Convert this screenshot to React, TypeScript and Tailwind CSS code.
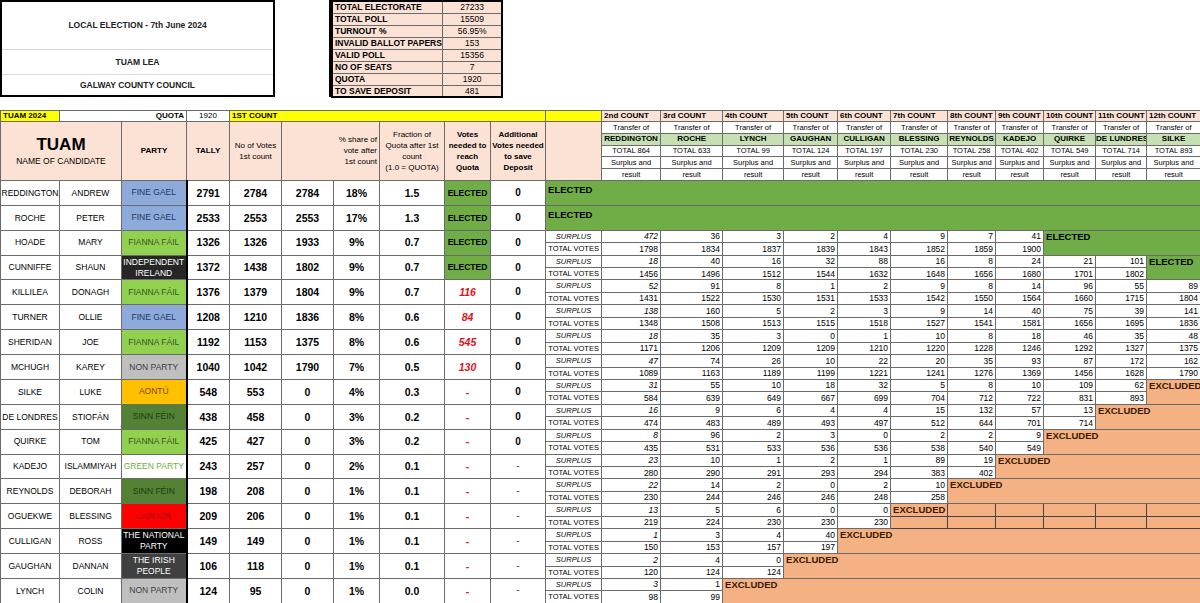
import React from 'react';

type Cand = {
  sur: string; first: string; party: string; tally: number; v1: number; v3: number;
  pct: string; frac: string; need: string; dep: string;
  s?: number[]; t?: number[]; end?: 'E' | 'X'; grid?: boolean;
};

const PARTY: Record<string, string> = {
  'FINE GAEL': 'bg-[#8eaadb] text-[#1f3864]',
  'FIANNA FÁIL': 'bg-[#92d050] text-[#375623]',
  'INDEPENDENT IRELAND': 'bg-[#262626] text-white',
  'NON PARTY': 'bg-[#bfbfbf] text-[#404040]',
  'AONTÚ': 'bg-[#ffc000] text-[#7f3f00]',
  'SINN FÉIN': 'bg-[#548235] text-[#1e3a10]',
  'GREEN PARTY': 'bg-white text-[#70ad47]',
  'LABOUR': 'bg-[#ff0000] text-[#a00000]',
  'THE NATIONAL PARTY': 'bg-black text-white',
  'THE IRISH PEOPLE': 'bg-[#404040] text-white',
};

const rows: Cand[] = [
  { sur: 'REDDINGTON', first: 'ANDREW', party: 'FINE GAEL', tally: 2791, v1: 2784, v3: 2784, pct: '18%', frac: '1.5', need: 'E', dep: '0', end: 'E' },
  { sur: 'ROCHE', first: 'PETER', party: 'FINE GAEL', tally: 2533, v1: 2553, v3: 2553, pct: '17%', frac: '1.3', need: 'E', dep: '0', end: 'E' },
  { sur: 'HOADE', first: 'MARY', party: 'FIANNA FÁIL', tally: 1326, v1: 1326, v3: 1933, pct: '9%', frac: '0.7', need: 'E', dep: '0', end: 'E', s: [472, 36, 3, 2, 4, 9, 7, 41], t: [1798, 1834, 1837, 1839, 1843, 1852, 1859, 1900] },
  { sur: 'CUNNIFFE', first: 'SHAUN', party: 'INDEPENDENT IRELAND', tally: 1372, v1: 1438, v3: 1802, pct: '9%', frac: '0.7', need: 'E', dep: '0', end: 'E', s: [18, 40, 16, 32, 88, 16, 8, 24, 21, 101], t: [1456, 1496, 1512, 1544, 1632, 1648, 1656, 1680, 1701, 1802] },
  { sur: 'KILLILEA', first: 'DONAGH', party: 'FIANNA FÁIL', tally: 1376, v1: 1379, v3: 1804, pct: '9%', frac: '0.7', need: '116', dep: '0', s: [52, 91, 8, 1, 2, 9, 8, 14, 96, 55, 89], t: [1431, 1522, 1530, 1531, 1533, 1542, 1550, 1564, 1660, 1715, 1804] },
  { sur: 'TURNER', first: 'OLLIE', party: 'FINE GAEL', tally: 1208, v1: 1210, v3: 1836, pct: '8%', frac: '0.6', need: '84', dep: '0', s: [138, 160, 5, 2, 3, 9, 14, 40, 75, 39, 141], t: [1348, 1508, 1513, 1515, 1518, 1527, 1541, 1581, 1656, 1695, 1836] },
  { sur: 'SHERIDAN', first: 'JOE', party: 'FIANNA FÁIL', tally: 1192, v1: 1153, v3: 1375, pct: '8%', frac: '0.6', need: '545', dep: '0', s: [18, 35, 3, 0, 1, 10, 8, 18, 46, 35, 48], t: [1171, 1206, 1209, 1209, 1210, 1220, 1228, 1246, 1292, 1327, 1375] },
  { sur: 'MCHUGH', first: 'KAREY', party: 'NON PARTY', tally: 1040, v1: 1042, v3: 1790, pct: '7%', frac: '0.5', need: '130', dep: '0', s: [47, 74, 26, 10, 22, 20, 35, 93, 87, 172, 162], t: [1089, 1163, 1189, 1199, 1221, 1241, 1276, 1369, 1456, 1628, 1790] },
  { sur: 'SILKE', first: 'LUKE', party: 'AONTÚ', tally: 548, v1: 553, v3: 0, pct: '4%', frac: '0.3', need: '-', dep: '0', end: 'X', s: [31, 55, 10, 18, 32, 5, 8, 10, 109, 62], t: [584, 639, 649, 667, 699, 704, 712, 722, 831, 893] },
  { sur: 'DE LONDRES', first: 'STIOFÁN', party: 'SINN FÉIN', tally: 438, v1: 458, v3: 0, pct: '3%', frac: '0.2', need: '-', dep: '0', end: 'X', s: [16, 9, 6, 4, 4, 15, 132, 57, 13], t: [474, 483, 489, 493, 497, 512, 644, 701, 714] },
  { sur: 'QUIRKE', first: 'TOM', party: 'FIANNA FÁIL', tally: 425, v1: 427, v3: 0, pct: '3%', frac: '0.2', need: '-', dep: '0', end: 'X', s: [8, 96, 2, 3, 0, 2, 2, 9], t: [435, 531, 533, 536, 536, 538, 540, 549] },
  { sur: 'KADEJO', first: 'ISLAMMIYAH', party: 'GREEN PARTY', tally: 243, v1: 257, v3: 0, pct: '2%', frac: '0.1', need: '-', dep: '-', end: 'X', s: [23, 10, 1, 2, 1, 89, 19], t: [280, 290, 291, 293, 294, 383, 402] },
  { sur: 'REYNOLDS', first: 'DEBORAH', party: 'SINN FÉIN', tally: 198, v1: 208, v3: 0, pct: '1%', frac: '0.1', need: '-', dep: '-', end: 'X', s: [22, 14, 2, 0, 2, 10], t: [230, 244, 246, 246, 248, 258] },
  { sur: 'OGUEKWE', first: 'BLESSING', party: 'LABOUR', tally: 209, v1: 206, v3: 0, pct: '1%', frac: '0.1', need: '-', dep: '-', end: 'X', grid: true, s: [13, 5, 6, 0, 0], t: [219, 224, 230, 230, 230] },
  { sur: 'CULLIGAN', first: 'ROSS', party: 'THE NATIONAL PARTY', tally: 149, v1: 149, v3: 0, pct: '1%', frac: '0.1', need: '-', dep: '-', end: 'X', s: [1, 3, 4, 40], t: [150, 153, 157, 197] },
  { sur: 'GAUGHAN', first: 'DANNAN', party: 'THE IRISH PEOPLE', tally: 106, v1: 118, v3: 0, pct: '1%', frac: '0.1', need: '-', dep: '-', end: 'X', s: [2, 4, 0], t: [120, 124, 124] },
  { sur: 'LYNCH', first: 'COLIN', party: 'NON PARTY', tally: 124, v1: 95, v3: 0, pct: '1%', frac: '0.0', need: '-', dep: '-', end: 'X', s: [3, 1], t: [98, 99] },
];

const counts = [
  ['2nd', 'REDDINGTON', 864], ['3rd', 'ROCHE', 633], ['4th', 'LYNCH', 99], ['5th', 'GAUGHAN', 124],
  ['6th', 'CULLIGAN', 197], ['7th', 'BLESSING', 230], ['8th', 'REYNOLDS', 258], ['9th', 'KADEJO', 402],
  ['10th', 'QUIRKE', 549], ['11th', 'DE LUNDRES', 714], ['12th', 'SILKE', 893],
] as const;

const widths = [59, 62, 65, 43, 52, 52, 46, 65, 46, 55, 56, 59, 62, 61, 54, 53, 57, 48, 48, 52, 51, 54];

const info: [string, string][] = [
  ['TOTAL ELECTORATE', '27233'], ['TOTAL POLL', '15509'], ['TURNOUT %', '56.95%'], ['INVALID BALLOT PAPERS', '153'],
  ['VALID POLL', '15356'], ['NO OF SEATS', '7'], ['QUOTA', '1920'], ['TO SAVE DEPOSIT', '481'],
];

const b = 'border border-[#6b6b6b]';
const ELECTED = 'bg-[#70ad47]';
const EXCL = 'bg-[#f4b183]';

const CandRows = ({ c }: { c: Cand }) => {
  const s = c.s ?? [];
  const t = c.t ?? [];
  const n = s.length;
  const rest = 11 - n;
  const bold = 'font-bold text-[10.5px] text-center';
  const left = (
    <>
      <td rowSpan={2} className={`${b} text-center text-[8.5px] whitespace-nowrap`}>{c.sur}</td>
      <td rowSpan={2} className={`${b} text-center text-[8.5px] whitespace-nowrap`}>{c.first}</td>
      <td rowSpan={2} className={`${b} border-r-2 border-r-black text-center text-[8.5px] leading-[11px] ${PARTY[c.party]}`}>{c.party}</td>
      <td rowSpan={2} className={`${b} ${bold}`}>{c.tally}</td>
      <td rowSpan={2} className={`${b} ${bold}`}>{c.v1}</td>
      <td rowSpan={2} className={`${b} ${bold}`}>{c.v3}</td>
      <td rowSpan={2} className={`${b} ${bold}`}>{c.pct}</td>
      <td rowSpan={2} className={`${b} ${bold}`}>{c.frac}</td>
      {c.need === 'E' ? (
        <td rowSpan={2} className={`${b} font-bold text-center ${ELECTED} text-[8.5px]`}>ELECTED</td>
      ) : (
        <td rowSpan={2} className={`${b} ${bold} italic text-[#e0101a]`}>{c.need}</td>
      )}
      <td rowSpan={2} className={`${b} ${c.dep === '-' ? 'text-[9px]' : 'font-bold text-[10px]'} text-center`}>{c.dep}</td>
    </>
  );
  if (n === 0) {
    return (
      <>
        <tr className="h-[12.45px]">
          {left}
          <td rowSpan={2} colSpan={12} className={`${b} ${ELECTED} align-top pl-0.5 pt-1 font-bold text-[9.5px]`}>ELECTED</td>
        </tr>
        <tr className="h-[12.45px]" />
      </>
    );
  }
  const endCls = c.end === 'E' ? ELECTED : EXCL;
  const endTxt = c.end === 'E' ? 'ELECTED' : 'EXCLUDED';
  const num = `${b} text-right pr-0.5 text-[8.5px]`;
  return (
    <>
      <tr className="h-[12.45px]">
        {left}
        <td className={`${b} text-center italic text-[7.5px]`}>SURPLUS</td>
        {s.map((v, i) => (
          <td key={i} className={`${num} ${i === 0 ? 'italic' : ''}`}>{v}</td>
        ))}
        {rest > 0 && (c.grid ? (
          Array.from({ length: rest }).map((_, i) => (
            <td key={'g' + i} className={`${b} border-[#444] ${EXCL} font-bold text-[9.5px] whitespace-nowrap pl-0.5 text-[#3a1a00]`}>{i === 0 ? endTxt : ''}</td>
          ))
        ) : (
          <td rowSpan={2} colSpan={rest} className={`${b} ${endCls} align-top pl-0.5 pt-px font-bold text-[9.5px] whitespace-nowrap ${c.end === 'X' ? 'text-[#3a1a00]' : ''}`}>{endTxt}</td>
        ))}
      </tr>
      <tr className="h-[12.45px]">
        <td className={`${b} text-center text-[7.5px] whitespace-nowrap`}>TOTAL VOTES</td>
        {t.map((v, i) => (
          <td key={i} className={num}>{v}</td>
        ))}
        {rest > 0 && c.grid && Array.from({ length: rest }).map((_, i) => (
          <td key={'h' + i} className={`${b} border-[#444] ${EXCL}`} />
        ))}
      </tr>
    </>
  );
};

export default function App() {
  const pink = 'bg-[#fbe2d5]';
  return (
    <div className="w-[1200px] h-[603px] overflow-hidden bg-white text-black leading-none" style={{ fontFamily: '"Liberation Sans", Arial, sans-serif' }}>
      <div className="flex h-[110px] items-start">
        <div className="w-[275px] h-[97px] border-2 border-black flex flex-col text-[8.5px] font-bold text-[#222]">
          <div className="h-[48px] flex items-center justify-center border-b border-[#d9d9d9]">LOCAL ELECTION - 7th June 2024</div>
          <div className="h-[25px] flex items-center justify-center border-b border-[#d9d9d9]">TUAM LEA</div>
          <div className="flex-1 flex items-center justify-center">GALWAY COUNTY COUNCIL</div>
        </div>
        <div className="w-[56px] h-[97px] border-r-2 border-black" />
        <table className="border-collapse table-fixed border-2 border-black text-[8.5px]">
          <colgroup><col className="w-[99px]" /><col className="w-[60px]" /></colgroup>
          <tbody>
            {info.map(([k, v]) => (
              <tr key={k} className="h-[12px]">
                <td className={`${b} ${pink} font-bold pl-0.5 whitespace-nowrap`}>{k}</td>
                <td className={`${b} ${pink} text-center`}>{v}</td>
              </tr>
            ))}
          </tbody>
        </table>
      </div>
      <table className="border-collapse table-fixed w-[1200px] leading-none">
        <colgroup>
          {widths.map((w, i) => <col key={i} style={{ width: w }} />)}
        </colgroup>
        <tbody>
          <tr className="h-[11px] text-[8px] font-bold">
            <td className={`${b} bg-[#ffff00] pl-0.5 whitespace-nowrap`}>TUAM 2024</td>
            <td colSpan={2} className={`${b} text-right pr-0.5`}>QUOTA</td>
            <td className={`${b} text-center font-normal`}>1920</td>
            <td colSpan={6} className={`${b} bg-[#ffff00] pl-0.5`}>1ST COUNT</td>
            <td className={`${b} bg-[#ffff00]`} />
            {counts.map(([c]) => (
              <td key={c} className={`${b} ${pink} pl-0.5 whitespace-nowrap overflow-hidden`}>{c} COUNT</td>
            ))}
          </tr>
          {[0, 1, 2, 3, 4].map((r) => (
            <tr key={r} className="h-[11.8px] text-[7.5px]">
              {r === 0 && (
                <>
                  <td rowSpan={5} colSpan={2} className={`${b} ${pink} text-center`}>
                    <div className="text-[17px] font-bold mb-1">TUAM</div>
                    <div className="text-[8.5px]">NAME OF CANDIDATE</div>
                  </td>
                  <td rowSpan={5} className={`${b} ${pink} text-center text-[8px] font-bold`}>PARTY</td>
                  <td rowSpan={5} className={`${b} ${pink} text-center text-[8px] font-bold`}>TALLY</td>
                  <td rowSpan={5} className={`${b} ${pink} text-center text-[8px] leading-[11px]`}>No of Votes<br />1st count</td>
                  <td rowSpan={5} colSpan={2} className={`${b} ${pink} text-right pr-0.5 text-[8px] leading-[11px]`}>% share of<br />vote after<br />1st count</td>
                  <td rowSpan={5} className={`${b} ${pink} text-center text-[8px] leading-[11px]`}>Fraction of<br />Quota after 1st<br />count<br />(1.0 = QUOTA)</td>
                  <td rowSpan={5} className={`${b} ${pink} text-center text-[8px] font-bold leading-[11px]`}>Votes<br />needed to<br />reach<br />Quota</td>
                  <td rowSpan={5} className={`${b} ${pink} text-center text-[8px] font-bold leading-[11px]`}>Additional<br />Votes needed<br />to save<br />Deposit</td>
                  <td rowSpan={5} className={`${b} ${pink}`} />
                </>
              )}
              {counts.map(([c, name, tot]) => (
                <td key={c} className={`${b} text-center whitespace-nowrap overflow-hidden ${r === 1 ? 'bg-[#c6e0b4] font-bold text-[8px]' : ''}`}>
                  {r === 0 ? 'Transfer of' : r === 1 ? name : r === 2 ? `TOTAL ${tot}` : r === 3 ? 'Surplus and' : 'result'}
                </td>
              ))}
            </tr>
          ))}
          {rows.map((c) => <CandRows key={c.sur} c={c} />)}
        </tbody>
      </table>
    </div>
  );
}
